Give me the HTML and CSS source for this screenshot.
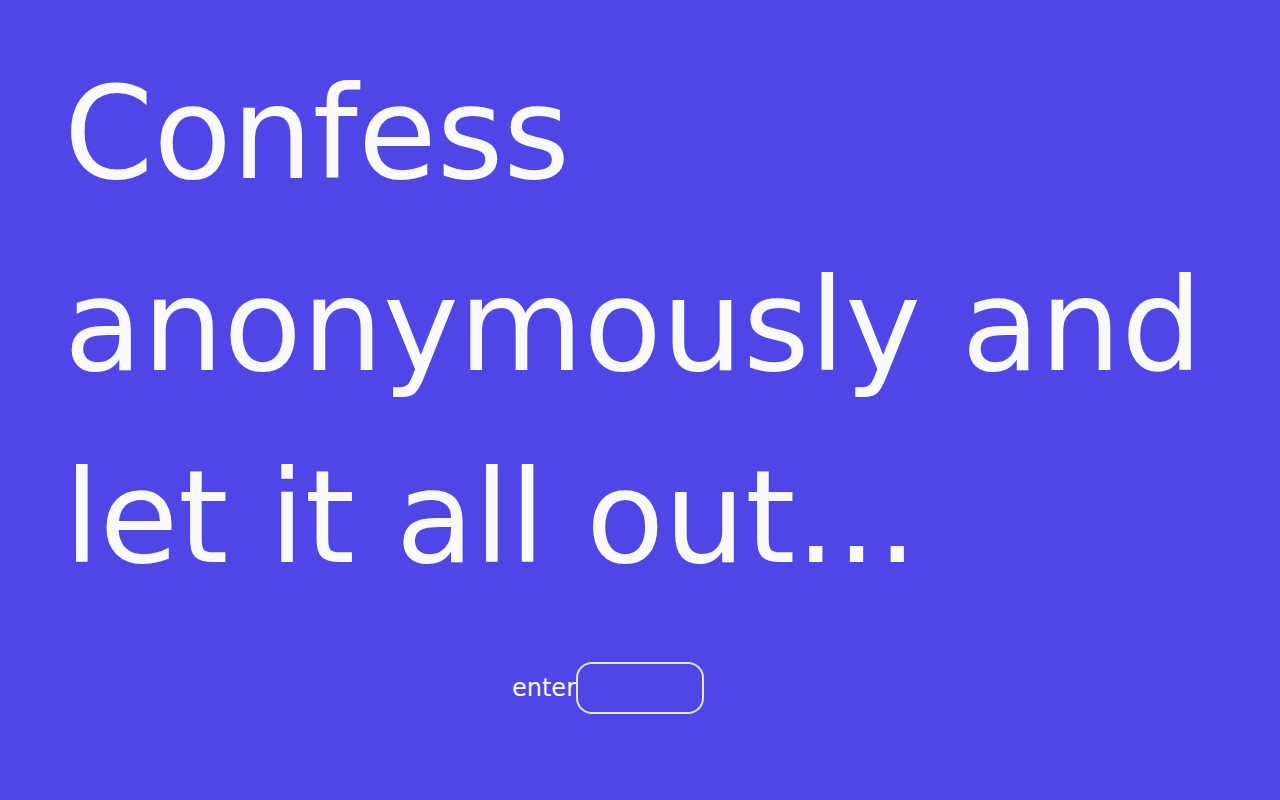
FILE: index.html
```html
<!DOCTYPE html>
<html lang="en">
<head>
<meta charset="utf-8">
<title>Confess</title>
<link rel="stylesheet" href="styles.css">
</head>
<body>
<main class="landing">
<h1 class="headline">Confess anonymously and let it all out...</h1>
<form class="entry">
<label class="entry-label" for="code">enter</label>
<input class="entry-input" id="code" type="text">
</form>
</main>
</body>
</html>
```

FILE: styles.css
```css
* {
  box-sizing: border-box;
}

body {
  margin: 0;
  background: #4f46e5;
  color: #f9fafb;
  font-family: "DejaVu Sans", sans-serif;
}

.landing {
  display: flex;
  flex-direction: column;
  justify-content: center;
  min-height: 100vh;
  padding: 0 64px;
}

.headline {
  margin: 0;
  font-size: 128px;
  font-weight: 400;
  line-height: 192px;
}

.entry {
  display: flex;
  justify-content: center;
  align-items: center;
  margin: 48px 0;
  padding-right: 64px;
}

.entry-label {
  font-size: 24px;
  line-height: 36px;
}

.entry-input {
  width: 128px;
  height: 52px;
  padding: 8px;
  border: 2px solid #e5e7eb;
  border-radius: 16px;
  background: transparent;
  color: inherit;
  font: inherit;
  font-size: 24px;
}
```
